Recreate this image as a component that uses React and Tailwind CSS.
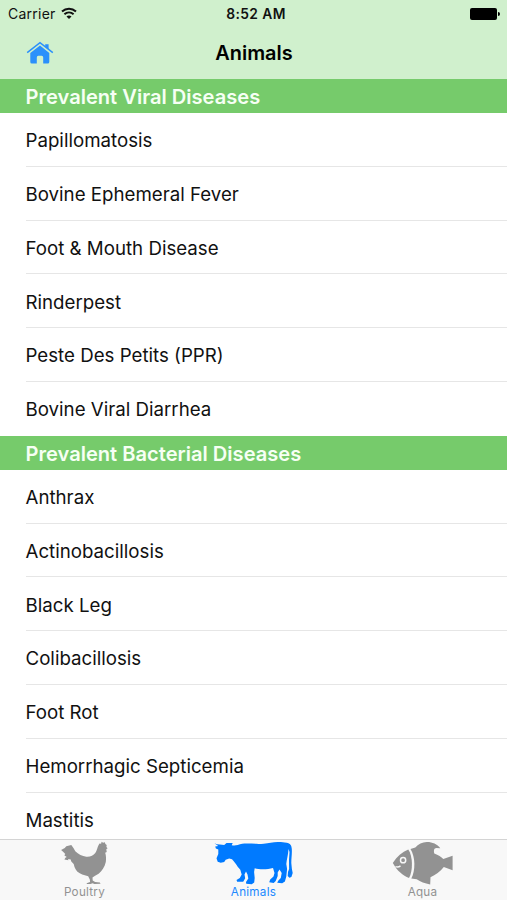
const sections = [
  {
    title: 'Prevalent Viral Diseases',
    items: ['Papillomatosis', 'Bovine Ephemeral Fever', 'Foot & Mouth Disease', 'Rinderpest', 'Peste Des Petits (PPR)', 'Bovine Viral Diarrhea'],
  },
  {
    title: 'Prevalent Bacterial Diseases',
    items: ['Anthrax', 'Actinobacillosis', 'Black Leg', 'Colibacillosis', 'Foot Rot', 'Hemorrhagic Septicemia', 'Mastitis'],
  },
];

function Wifi() {
  return (
    <svg className="mb-px h-[13px] w-4" viewBox="0 0 16 13" fill="none" stroke="#111" strokeWidth="2">
      <path d="M1 4.4C5 .7 11 .7 15 4.4" />
      <path d="M3.4 7.3c2.7-2.4 6.5-2.4 9.2 0" />
      <path d="M8 12 5.5 9.5c1.4-1.3 3.6-1.3 5 0Z" fill="#111" stroke="none" />
    </svg>
  );
}

function House() {
  return (
    <svg className="h-6 w-7" viewBox="0 0 28 24">
      <path d="M1.2 11.6 14 1.7l12.8 9.9" fill="none" stroke="#2b90fb" strokeWidth="1.5" />
      <path d="M19.2 3.2h3.4v5.2l-3.4-2.6Z" fill="#2b90fb" />
      <path d="M4.3 12 14 4.5l9.3 7.5V21q0 1.6-1.6 1.6h-4.5v-6.2q0-1.6-1.5-1.6h-3.4q-1.5 0-1.5 1.6v6.2H5.9q-1.6 0-1.6-1.6Z" fill="#2b90fb" />
    </svg>
  );
}

function Rooster() {
  return (
    <svg className="h-[46px] w-[50px]" viewBox="0.7 0 50 46" fill="#929292">
      <path d="M1.8 10 5.5 8 7 6.2 12 5l2.3 3.2L16 11.2C19 14.3 23 16.1 27 16.7c4 .3 7-1 9-3.7 1.8-2.8 2-5.5 3.2-7.8L40.2 3.6l1.6.2.5-2 1.5 1 1.7-.5.6 1.8 1.3 1-.3 2L48.3 8.3 47 9.3l.4 2.6-1.5.8c1 3 1 6.4.6 9.3-1.2 5.2-3.9 9-7.2 11.8L35.4 36l-2.2 1.6.2 2.8 2.4 1.5 4.8.6.6 1.2-6 .2-2-.6-2 .7-3.6.1-.3-.8 3.5-1.3-.3-2.4-1.6-3.3-6-1.9C18.6 33 16.4 30.3 15.2 27l-.8-3-2.4-2.6-.6-1.9-2.6-.4.3 1.2-4-.9 1-1.7 1.3-.7-2.4-1.8 1-1.2-2.2-2.2Z" />
    </svg>
  );
}

function Cow() {
  return (
    <svg className="h-[46px] w-[80px]" viewBox="1.3 0 80 46" fill="#007aff">
      <path d="M1.8 3.2Q4 4.4 7.2 4.4L11.5 5 13.8 3 20 3 19 5.2Q22 5.8 25 5C28 4 31 3.6 34 3.6C40 3.6 45 4.2 51 3.7C56 3.1 60 2.1 65 2C69 1.9 71 2.6 74 2.8C77.5 3.2 78.9 5.5 79.1 9C79.4 14 78.6 18 78.6 23L79.2 29L80 33L78.7 37L76.7 37.8L75 36L75.3 32L76.4 29L76.3 20L76.8 12L75.8 9C75.5 15 74 19 73.6 24L74.4 29L73.6 36.5L72.2 41.5L69.5 43.2L64.5 42.8L65.5 40.8L68.1 38L69 33L66.8 29.5L65 32.5L65 36L63 41L61 43L56.5 42.2L57.5 39.5L60.8 36.5L61.8 33L60.3 28C55 29.5 47 29.7 42 28.3L41.4 32L42 38L41.5 42.5L39 44.2L33.5 43.8L33.3 42L35.6 38.5L34.8 34.5L33.3 31.5L31.8 34.5L32.5 38.3L30.5 41.7L24.5 41.8L23.8 40L27.1 38L29 34.5L27.6 29.8L25 26.7C23 23.7 21.5 21.4 19.3 19.2L16.5 18.4L13 19.7L11.5 22L8 22.8L5 21.8L3.8 18.3L5.6 14L5.6 9.5L3.2 8.6L2.5 6.4L5.5 6Z" />
    </svg>
  );
}

function Fish() {
  return (
    <svg className="h-[46px] w-[62px]" viewBox="0.7 0 62 46">
      <path d="M1.5 23C5.5 16.5 10.8 11.9 17 9.4c4.6 6.5 4.8 21.6.7 28.6C11.5 35.6 6 31 1.5 23Z" fill="#929292" />
      <path d="M19.2 8.9 24 7.6c3-3.4 7.4-5.8 12-5.6 5 .1 10 2 13 6.2l-3.8-.1c-2.7 0-2.9 3-2.2 5.3 4 1.3 7 3.5 9 5.7l9.3-3.4v14.5L52.5 27c-3.6 4.4-8.3 8-13.3 10.2l-.3 7.3c-5.5-.9-9.6-2.9-13.5-5.2l-5.4-.7c4.3-8.2 4.2-21.5-.8-29.7Z" fill="#929292" />
      <circle cx="11.8" cy="20.2" r="2.6" fill="none" stroke="#f8f8f8" strokeWidth="1.5" />
      <path d="M4.2 26.6q2.8 1 5-.7" fill="none" stroke="#f8f8f8" strokeWidth="1.4" />
    </svg>
  );
}

function Tab({ icon, label, active }) {
  return (
    <div className={`flex flex-1 flex-col items-center text-[11.7px] leading-[13px] tracking-[0.25px] ${active ? 'text-[#2089ff]' : 'text-[#929292]'}`}>
      {icon}
      <span>{label}</span>
    </div>
  );
}

export default function App() {
  return (
    <div className="flex h-[900px] w-[507px] flex-col overflow-hidden bg-white font-['Inter',sans-serif] text-[#111]">
      <header className="h-[79px] shrink-0 bg-[#d0f0cd]">
        <div className="grid h-7 grid-cols-3 items-center pr-[7px] pl-2">
          <div className="flex items-center gap-[5px] text-[14px] leading-5 tracking-[0.25px]">
            <span className="pb-px">Carrier</span>
            <Wifi />
          </div>
          <span className="pl-1 text-center text-[13.8px] font-semibold tracking-[0.4px]">8:52 AM</span>
          <div className="flex items-center justify-end gap-px">
            <span className="h-3 w-[27px] rounded-[2px] bg-black" />
            <span className="h-1 w-[2px] rounded-r-full bg-black" />
          </div>
        </div>
        <div className="grid h-[50px] grid-cols-3 items-center">
          <div className="pl-[26px]"><House /></div>
          <h1 className="pl-px text-center text-[19.9px] leading-7 font-semibold text-black">Animals</h1>
        </div>
      </header>
      <main className="min-h-0 flex-1 overflow-hidden">
        {sections.map((section) => (
          <section key={section.title}>
            <h2 className="flex h-[34px] items-center bg-[#76cb6b] pt-[2px] pl-[25.5px] text-[20.1px] font-semibold text-[#f6fff4]">{section.title}</h2>
            <ul className="pl-[25.5px]">
              {section.items.map((item) => (
                <li key={item} className="flex h-[53.8px] items-center border-b border-[#e6e6e6] pt-[3.6px] text-[18.7px] last:border-transparent">{item}</li>
              ))}
            </ul>
          </section>
        ))}
      </main>
      <nav className="flex h-[61px] shrink-0 border-t border-[#d4d4d4] bg-[#f8f8f8]">
        <Tab icon={<Rooster />} label="Poultry" />
        <Tab icon={<Cow />} label="Animals" active />
        <Tab icon={<Fish />} label="Aqua" />
      </nav>
    </div>
  );
}
